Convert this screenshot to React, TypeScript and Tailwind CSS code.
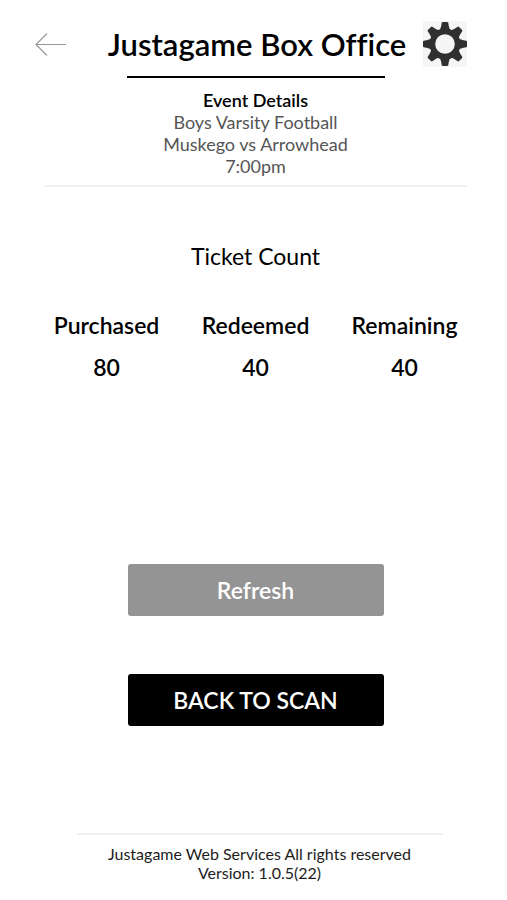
const eventLines = ['Boys Varsity Football', 'Muskego vs Arrowhead', '7:00pm'];

const counts = [
  { label: 'Purchased', value: 80 },
  { label: 'Redeemed', value: 40 },
  { label: 'Remaining', value: 40 },
];

function BackArrow() {
  return (
    <svg width="32" height="24" viewBox="0 0 32 24" fill="none" stroke="#9a9a9a" strokeWidth="1.2" aria-hidden="true">
      <path d="M31 12.5H1M12 1.5L1 12.5L12 23.5" />
    </svg>
  );
}

const toothAngles = [0, 45, 90, 135, 180, 225, 270, 315];

function GearIcon() {
  return (
    <svg width="44" height="46" viewBox="-22 -23 44 46" fill="#303030" aria-hidden="true">
      <circle r="12.6" fill="none" stroke="#303030" strokeWidth="5.6" />
      {toothAngles.map((angle) => (
        <path
          key={angle}
          transform={`rotate(${angle})`}
          d="M-6 -13.5Q-4.4 -15.2 -3.9 -17.5L-3.2 -21.2Q-3 -22 -2.2 -22H2.2Q3 -22 3.2 -21.2L3.9 -17.5Q4.4 -15.2 6 -13.5Z"
        />
      ))}
    </svg>
  );
}

export default function App() {
  return (
    <div className="min-h-screen flex flex-col bg-white pl-8 pr-7 text-black font-['Lato','Open_Sans',sans-serif] [font-variant-ligatures:none]">
      <header className="pt-[21px]">
        <div className="flex items-center justify-between pl-[3px] pr-3">
          <button type="button" aria-label="Back">
            <BackArrow />
          </button>
          <h1 className="pl-6 text-[31px] leading-9 font-semibold whitespace-nowrap">Justagame Box Office</h1>
          <button type="button" aria-label="Settings" className="bg-[#f5f5f5]">
            <GearIcon />
          </button>
        </div>
        <div className="mx-auto mt-[9px] w-[258px] border-t-2 border-black" />
      </header>

      <section className="mx-3 mt-[11px] border-b-2 border-[#f2f2f2] pb-2 text-center text-lg leading-[22px]">
        <h2 className="font-semibold">Event Details</h2>
        {eventLines.map((line) => (
          <p key={line} className="text-[#555555]">{line}</p>
        ))}
      </section>

      <main className="flex flex-col">
        <h2 className="mt-[55px] text-center text-[23px] leading-7">Ticket Count</h2>

        <table className="mt-[41px] w-full table-fixed text-center text-[23px] leading-7">
          <thead>
            <tr>
              {counts.map((count) => (
                <th key={count.label} scope="col" className="p-0 pb-[14px] font-semibold">{count.label}</th>
              ))}
            </tr>
          </thead>
          <tbody>
            <tr>
              {counts.map((count) => (
                <td key={count.label} className="p-0 font-semibold">{count.value}</td>
              ))}
            </tr>
          </tbody>
        </table>

        <div className="mt-[183px] flex flex-col items-center gap-[58px] text-[23px] leading-7 font-semibold text-white">
          <button type="button" className="h-[52px] w-64 rounded-[3px] bg-[#949494]">Refresh</button>
          <button type="button" className="h-[52px] w-64 rounded-[3px] bg-black">BACK TO SCAN</button>
        </div>
      </main>

      <footer className="mt-auto pb-[18px] pl-2 text-center text-base leading-[19px] text-[#1c1c1c]">
        <div className="mx-auto mb-[9px] w-[366px] border-t-2 border-[#f2f2f2]" />
        <p>Justagame Web Services All rights reserved</p>
        <p>Version: 1.0.5(22)</p>
      </footer>
    </div>
  );
}
